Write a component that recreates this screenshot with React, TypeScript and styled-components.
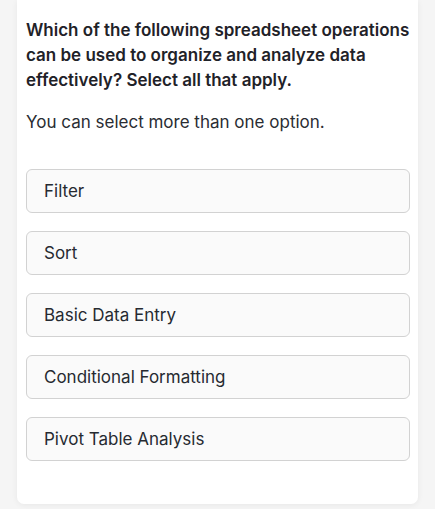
import styled, { createGlobalStyle } from "styled-components";

const GlobalStyle = createGlobalStyle`
  html, body {
    margin: 0;
    padding: 0;
    background: #f5f5f5;
  }
  * {
    box-sizing: border-box;
  }
`;

const options = [
    "Filter",
    "Sort",
    "Basic Data Entry",
    "Conditional Formatting",
    "Pivot Table Analysis",
];

const Page = styled.div`
  width: 435px;
  min-height: 509px;
  padding: 0 17px 6px;
  font-family: Inter, "Noto Sans", sans-serif;
`;

const Card = styled.div`
  background: #ffffff;
  border-radius: 0 0 7px 7px;
  box-shadow: 0 1px 6px rgba(0, 0, 0, 0.06);
  padding: 18px 8px 43px 9px;
`;

const Question = styled.h2`
  margin: 0 -8px 0 0;
  font-size: 17px;
  font-weight: 600;
  line-height: 25px;
  color: #1f2228;
`;

const Hint = styled.p`
  margin: 17px 0 0;
  font-size: 17px;
  font-weight: 400;
  line-height: 24px;
  color: #2a2d33;
`;

const OptionList = styled.div`
  display: flex;
  flex-direction: column;
  gap: 18px;
  margin-top: 35px;
`;

const Option = styled.button`
  display: flex;
  align-items: center;
  height: 44px;
  width: 100%;
  padding: 0 17px;
  background: #fafafa;
  border: 1px solid #d2d2d2;
  border-radius: 6px;
  font-family: inherit;
  font-size: 17px;
  color: #262a31;
  text-align: left;
  cursor: pointer;
`;

const App = () => {
    return (
        <>
            <GlobalStyle />
            <Page>
                <Card>
                    <Question>
                        Which of the following spreadsheet operations can be used to organize and analyze data effectively? Select all that apply.
                    </Question>
                    <Hint>You can select more than one option.</Hint>
                    <OptionList>
                        {options.map((label) => (
                            <Option key={label}>{label}</Option>
                        ))}
                    </OptionList>
                </Card>
            </Page>
        </>
    )
}

export default App;
